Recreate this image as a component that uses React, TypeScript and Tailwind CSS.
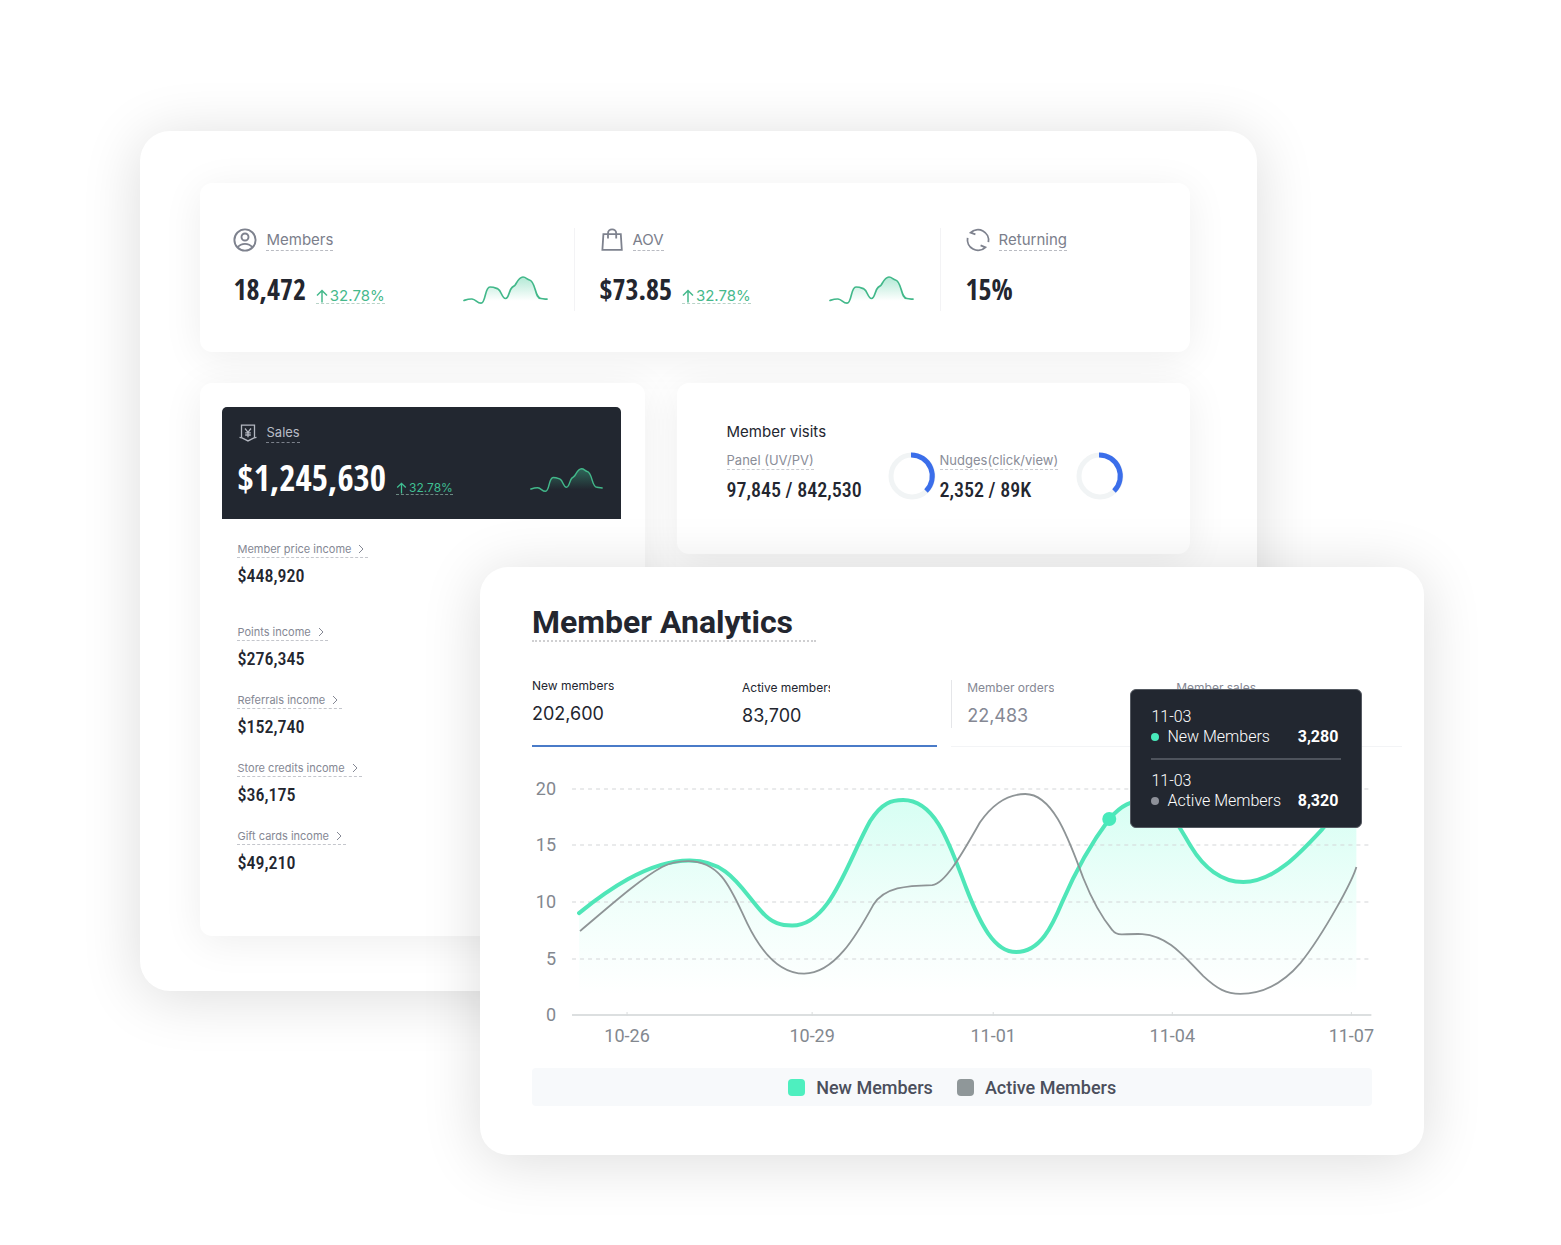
import React from "react";

const SPARK_LINE =
  "M1 25.5C4 24.5 6 23.8 9 24C13 24.5 14 28.2 18 28.2C23 28.2 21.5 12 27 12C31 12 32 12.8 35 14C38.5 16 39 23.5 42.5 23.5C46 23.5 46 15 49 12.5C50.5 11.3 51.5 11 52.5 9.5C54.5 6 56.5 2 60 2C63 2 64 4.5 66.5 5C73 6.5 71.5 23.5 78 23.5C80 24 82 24 84 24.2";

const NEW_MEMBERS_LINE =
  "M47 143C72 123 116 90 158 90.5C196 91 207 116 229 141C240 154 250 155.5 260 155.5C298 155.5 315 92 338 51C350 32 360 30 371 30C404 30 418 76 434 118C448 154 462 182 484 182C508 182 520 156 530 132C542 104 556 77 577 49C590 34 600 31 610 31C636 31 646 56 659 77C671 97 689 112 711 112C741 112 767 84 790 59C803 44 815 30 824 20";

const ACTIVE_MEMBERS_LINE =
  "M48 161C80 134 108 109 130 97C138 92.5 146 91 156 91C190 91 200 122 215 153C231 186 250 203.5 272 203.5C302 203.5 324 166 341 135C352 117 375 115.5 400 115C414 114 434 76 448 52C462 32 478 24 493 24C522 24 538 74 551 108C559 128 570 148 580 160C583 164 586 164.5 590 164.3C598 164 604 163.8 610 164C637 166 652 187 671 206C685 219 694 223.7 708 223.7C736 223.7 756 207 768 193C786 171 800 145 808 131C814 120 822 104 824 97";

const LEVELS = [
  { label: "20", y: 19 },
  { label: "15", y: 75 },
  { label: "10", y: 132 },
  { label: "5", y: 189 },
  { label: "0", y: 245 },
];

const DATES = [
  { label: "10-26", x: 95 },
  { label: "10-29", x: 280 },
  { label: "11-01", x: 461 },
  { label: "11-04", x: 640 },
  { label: "11-07", x: 819 },
];

const INCOMES = [
  { label: "Member price income", value: "$448,920" },
  { label: "Points income", value: "$276,345" },
  { label: "Referrals income", value: "$152,740" },
  { label: "Store credits income", value: "$36,175" },
  { label: "Gift cards income", value: "$49,210" },
];

function Sparkline({ id, dark = false }: { id: string; dark?: boolean }) {
  return (
    <svg
      viewBox="0 0 85 30"
      className={dark ? "h-[26px] w-[73px] shrink-0" : "h-[30px] w-[85px] shrink-0"}
      fill="none"
      aria-hidden="true"
    >
      <defs>
        <linearGradient id={id} x1="0" y1="0" x2="0" y2="1">
          <stop offset="0" stopColor="#3fc796" stopOpacity="0.4" />
          <stop offset="0.85" stopColor="#3fc796" stopOpacity="0" />
        </linearGradient>
      </defs>
      <path d={`${SPARK_LINE}V30H1Z`} fill={`url(#${id})`} />
      <path d={SPARK_LINE} stroke="#42b88a" strokeWidth="1.7" strokeLinecap="round" />
    </svg>
  );
}

function Growth({ small = false }: { small?: boolean }) {
  return (
    <span
      className={
        small
          ? "flex items-center gap-0.5 border-b border-dashed border-[#6d8a83] text-xs leading-[13px] text-[#3fbf92]"
          : "flex items-center gap-0.5 border-b border-dashed border-[#b9d3c8] text-[15px] leading-[15px] text-[#46b98c]"
      }
    >
      <svg
        viewBox="0 0 12 14"
        className={small ? "h-3 w-[11px]" : "h-3.5 w-3"}
        fill="none"
        stroke="currentColor"
        strokeWidth="1.5"
        aria-hidden="true"
      >
        <path d="M6 13.5V1.5M1 6.5l5-5 5 5" />
      </svg>
      32.78%
    </span>
  );
}

function MembersIcon() {
  return (
    <svg viewBox="0 0 24 24" className="size-6" fill="none" stroke="#7e828e" strokeWidth="1.9" aria-hidden="true">
      <circle cx="12" cy="12" r="10.6" />
      <circle cx="12" cy="9" r="3.5" />
      <path d="M4.5 19.4c2-2.4 4.6-3.5 7.5-3.5s5.5 1.1 7.5 3.5" />
    </svg>
  );
}

function BagIcon() {
  return (
    <svg viewBox="0 0 24 24" className="size-6" fill="none" stroke="#7e828e" strokeWidth="1.8" aria-hidden="true">
      <path d="M3.4 6.2h17.4l1 15.6H2.4z" />
      <path d="M8 10.5V5.4a4.1 4.1 0 0 1 8.2 0v5.1" />
    </svg>
  );
}

function ReturningIcon() {
  return (
    <svg viewBox="0 0 24 24" className="size-6" fill="none" stroke="#7e828e" strokeWidth="1.8" aria-hidden="true">
      <path d="M9.4 6.4L4.6 4.7A10.6 10.6 0 0 1 22.4 14.2" />
      <path d="M14.6 17.4l4.8 1.9A10.6 10.6 0 0 1 1.6 9.8" />
    </svg>
  );
}

function SalesIcon() {
  return (
    <svg viewBox="0 0 18 18" className="size-[18px]" fill="none" stroke="#b3b7c0" strokeWidth="1.3" aria-hidden="true">
      <path d="M2.5 13.5V1.2h13v12.3" />
      <path d="M.5 13.4l2.5.5 6 3 6-3 2.5-.5" />
      <path d="M6 4.5l3 3.8 3-3.8M9 8.3v5M6.2 8.8h5.6M6.2 11h5.6" />
    </svg>
  );
}

function Stat({
  icon,
  label,
  value,
  sparkId,
}: {
  icon: React.ReactNode;
  label: string;
  value: string;
  sparkId?: string;
}) {
  return (
    <div className="h-[83px] border-r border-[#f3f3f5] pr-[26px] pl-[25px] last:border-r-0 last:pr-0">
      <div className="flex items-center gap-[9px]">
        {icon}
        <span className="border-b border-dashed border-[#b9bbc2] text-[15px] leading-[21px] text-[#7b7e8b]">
          {label}
        </span>
      </div>
      <div className="mt-5 flex items-end">
        <strong className="font-['Open_Sans_Condensed','Roboto_Condensed',sans-serif] text-[28px] leading-[34px] font-bold text-[#23262f]">
          {value}
        </strong>
        {sparkId && (
          <>
            <span className="ml-2.5 pb-0.5">
              <Growth />
            </span>
            <span className="ml-auto pb-px">
              <Sparkline id={sparkId} />
            </span>
          </>
        )}
      </div>
    </div>
  );
}

function Ring() {
  return (
    <svg viewBox="0 0 48 48" className="size-12 shrink-0" fill="none" strokeWidth="5" aria-hidden="true">
      <circle cx="24" cy="24" r="21" stroke="#f1f4f5" />
      <path d="M23 3a21 21 0 0 1 15 36" stroke="#3b6eea" />
    </svg>
  );
}

function Visit({ label, value }: { label: string; value: string }) {
  return (
    <div>
      <p className="w-fit border-b border-dashed border-[#c9cbd0] text-[13px] leading-[17px] text-[#8a8d98]">
        {label}
      </p>
      <p className="mt-1.5 font-['Roboto_Condensed',sans-serif] text-[20px] leading-7 font-medium whitespace-nowrap text-[#23262f]">
        {value}
      </p>
    </div>
  );
}

function Metric({
  label,
  value,
  className = "",
  labelClass = "",
}: {
  label: string;
  value?: string;
  className?: string;
  labelClass?: string;
}) {
  return (
    <button type="button" role="tab" className={`flex flex-col items-start ${className}`}>
      <span className={`block overflow-hidden text-xs leading-4 whitespace-nowrap ${labelClass}`}>{label}</span>
      {value && <span className="mt-2 block text-[18px] leading-6">{value}</span>}
    </button>
  );
}

function TooltipRow({ dot, label, value }: { dot: string; label: string; value: string }) {
  return (
    <div>
      <p className="leading-5">11-03</p>
      <div className="flex items-center leading-5">
        <i className={`size-2 rounded-full ${dot}`} />
        <span className="ml-2">{label}</span>
        <strong className="mr-[3px] ml-auto font-bold">{value}</strong>
      </div>
    </div>
  );
}

function Chart() {
  return (
    <svg
      viewBox="0 0 840 280"
      className="block w-full overflow-visible"
      fill="none"
      role="img"
      aria-label="New and active members per day"
    >
      <defs>
        <linearGradient id="new-fill" gradientUnits="userSpaceOnUse" x1="0" y1="20" x2="0" y2="225">
          <stop offset="0" stopColor="#5cfccf" stopOpacity="0.26" />
          <stop offset="0.6" stopColor="#5cfccf" stopOpacity="0.08" />
          <stop offset="1" stopColor="#5cfccf" stopOpacity="0" />
        </linearGradient>
      </defs>
      <path d={`${NEW_MEMBERS_LINE}V245H47Z`} fill="url(#new-fill)" />
      {LEVELS.map(({ label, y }) => (
        <g key={label}>
          <line
            x1="40"
            x2="839"
            y1={y}
            y2={y}
            stroke={label === "0" ? "#dcdfe0" : "#d3d6d8"}
            strokeWidth={label === "0" ? 2 : 1}
            strokeDasharray={label === "0" ? undefined : "4 4"}
          />
          <text x="24" y={y + 6} textAnchor="end" fontSize="18" fill="#83888f">
            {label}
          </text>
        </g>
      ))}
      {DATES.map(({ label, x }) => (
        <g key={label}>
          <line x1={x} x2={x} y1="242" y2="246" stroke="#d9dcdd" />
          <text x={x} y="272" textAnchor="middle" fontSize="18" fill="#83888f">
            {label}
          </text>
        </g>
      ))}
      <path d={NEW_MEMBERS_LINE} stroke="#4fe6b8" strokeWidth="4" strokeLinecap="round" />
      <path d={ACTIVE_MEMBERS_LINE} stroke="#8e9496" strokeWidth="1.8" />
      <circle cx="577" cy="49" r="7" fill="#48eabb" />
    </svg>
  );
}

export default function App() {
  return (
    <main className="min-h-screen overflow-hidden bg-white pt-[131px] pb-[90px] font-['Inter',sans-serif]">
      <section className="ml-[9%] w-[71.5%] rounded-[30px] bg-white pt-[52px] pr-[67px] pb-[55px] pl-[60px] shadow-[0_6px_60px_rgba(0,0,0,0.14)]">
        <div className="grid grid-cols-[366fr_366fr_249fr] rounded-xl bg-white pt-[45px] pb-[41px] pl-2 shadow-[0_6px_40px_rgba(0,0,0,0.07)]">
          <Stat icon={<MembersIcon />} label="Members" value="18,472" sparkId="spark-members" />
          <Stat icon={<BagIcon />} label="AOV" value="$73.85" sparkId="spark-aov" />
          <Stat icon={<ReturningIcon />} label="Returning" value="15%" />
        </div>

        <div className="mt-[31px] grid grid-cols-[444fr_513fr] items-start gap-8">
          <article className="rounded-xl bg-white pt-6 pr-6 pb-[61px] pl-[22px] shadow-[0_6px_40px_rgba(0,0,0,0.07)]">
            <div className="rounded-t-[5px] bg-[#222730] px-[15px] pt-4 pb-[21px]">
              <div className="flex items-center gap-[9px] pl-0.5">
                <SalesIcon />
                <span className="border-b border-dashed border-[#7c818b] text-[13px] leading-[19px] text-[#b9bcc5]">
                  Sales
                </span>
              </div>
              <div className="mt-[15px] flex items-end">
                <strong className="font-['Open_Sans_Condensed','Roboto_Condensed',sans-serif] text-[35px] leading-10 font-bold text-white">
                  $1,245,630
                </strong>
                <span className="ml-2.5 pb-[3px]">
                  <Growth small />
                </span>
                <span className="mr-[3px] ml-auto pb-[5px]">
                  <Sparkline id="spark-sales" dark />
                </span>
              </div>
            </div>
            <ul className="px-[15px] pt-[22px]">
              {INCOMES.map(({ label, value }) => (
                <li key={label} className="mb-[21px] first:mb-9 last:mb-0">
                  <a
                    href="#income"
                    className="flex w-fit items-center gap-[7px] border-b border-dashed border-[#c4c6cc] pr-1 text-[11px] leading-4 text-[#858894]"
                  >
                    {label}
                    <svg viewBox="0 0 6 10" className="h-2.5 w-1.5" fill="none" stroke="currentColor" aria-hidden="true">
                      <path d="M1 1l4 4-4 4" />
                    </svg>
                  </a>
                  <p className="mt-1.5 font-['Roboto_Condensed',sans-serif] text-[18px] leading-6 font-medium text-[#23262f]">
                    {value}
                  </p>
                </li>
              ))}
            </ul>
          </article>

          <article className="rounded-xl bg-white pt-[38px] pb-[50px] pl-[50px] shadow-[0_6px_40px_rgba(0,0,0,0.07)]">
            <h2 className="text-[15px] leading-[22px] text-[#23262f]">Member visits</h2>
            <div className="mt-[9px] flex">
              <div className="flex w-[213px] shrink-0 justify-between pr-1">
                <Visit label="Panel (UV/PV)" value="97,845 / 842,530" />
                <Ring />
              </div>
              <div className="flex gap-[18px]">
                <Visit label="Nudges(click/view)" value="2,352 / 89K" />
                <Ring />
              </div>
            </div>
          </article>
        </div>
      </section>

      <section className="relative -mt-[424px] ml-[30.75%] w-[60.5%] rounded-[28px] bg-white px-[52px] pt-[37px] pb-[49px] shadow-[0_6px_60px_rgba(0,0,0,0.14)]">
        <h1 className="w-fit border-b-2 border-dotted border-[#cfcfd1] pr-[23px] font-['Roboto',sans-serif] text-[32px] leading-9 font-bold text-[#23262f]">
          Member Analytics
        </h1>

        <div className="relative pt-9">
          <div role="tablist" className="-mr-[30px] flex gap-[14px]">
            <div className="flex flex-[405] items-start border-b-2 border-[#4a7bc8] pb-[17px] text-[#23262f]">
              <Metric label="New members" value="202,600" className="w-[210px]" />
              <Metric label="Active members" value="83,700" className="pt-0.5" labelClass="w-[88px]" />
            </div>
            <div className="flex flex-[451] items-start border-b border-[#f3f4f6] pt-0.5 text-[#858894]">
              <Metric label="Member orders" value="22,483" className="w-[225px] border-l border-[#e5e6e9] pl-[15px]" />
              <Metric label="Member sales" />
            </div>
          </div>

          <div className="mt-[23px] font-['Roboto',sans-serif]">
            <Chart />
          </div>

          <div className="absolute top-[47px] right-[10px] w-[232px] rounded-md border border-[#555a62] bg-[#222730] px-5 pt-[17px] pb-4 font-['Roboto',sans-serif] text-base font-light text-white">
            <TooltipRow dot="bg-[#48eabb]" label="New Members" value="3,280" />
            <hr className="my-[11px] border-t-2 border-[#4e535c]" />
            <TooltipRow dot="bg-[#8e9199]" label="Active Members" value="8,320" />
          </div>
        </div>

        <div className="mt-[18px] flex h-[38px] items-center justify-center gap-6 rounded bg-[#f7f9fb] font-['Roboto',sans-serif] text-[18px] font-medium text-[#4b4f5c]">
          <span className="flex items-center gap-[11px]">
            <i className="size-[17px] rounded bg-[#4eefbf]" />
            New Members
          </span>
          <span className="flex items-center gap-[11px]">
            <i className="size-[17px] rounded bg-[#8f9799]" />
            Active Members
          </span>
        </div>
      </section>
    </main>
  );
}
